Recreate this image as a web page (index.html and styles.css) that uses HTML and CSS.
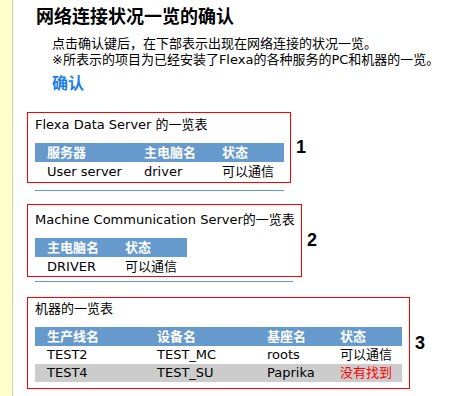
FILE: index.html
```html
<!DOCTYPE html>
<html lang="zh-CN">
<head>
    <meta charset="UTF-8">
    <meta name="viewport" content="width=device-width, initial-scale=1.0">
    <title>网络连接状况一览的确认</title>
    <link rel="stylesheet" href="styles.css">
</head>
<body>
    <div class="sidebar"></div>

    <div class="main">
        <h1 class="page-title">网络连接状况一览的确认</h1>
        <p class="intro">点击确认键后，在下部表示出现在网络连接的状况一览。<br>※所表示的项目为已经安装了Flexa的各种服务的PC和机器的一览。</p>
        <a href="#" class="confirm">确认</a>

        <div class="list-row row-1">
            <div class="list-box box-1">
                <div class="caption">Flexa Data Server 的一览表</div>
                <table class="list-table table-1">
                    <colgroup>
                        <col class="w97">
                        <col class="w78">
                        <col class="w74">
                    </colgroup>
                    <tr>
                        <th>服务器</th>
                        <th>主电脑名</th>
                        <th>状态</th>
                    </tr>
                    <tr>
                        <td>User server</td>
                        <td>driver</td>
                        <td>可以通信</td>
                    </tr>
                </table>
            </div>
            <span class="num">1</span>
        </div>
        <div class="divider div-1"></div>

        <div class="list-row row-2">
            <div class="list-box box-2">
                <div class="caption">Machine Communication Server的一览表</div>
                <table class="list-table table-2">
                    <colgroup>
                        <col class="w78">
                        <col class="w74">
                    </colgroup>
                    <tr>
                        <th>主电脑名</th>
                        <th>状态</th>
                    </tr>
                    <tr>
                        <td>DRIVER</td>
                        <td>可以通信</td>
                    </tr>
                </table>
            </div>
            <span class="num">2</span>
        </div>
        <div class="divider div-2"></div>

        <div class="list-row row-3">
            <div class="list-box box-3">
                <div class="caption">机器的一览表</div>
                <table class="list-table table-3">
                    <colgroup>
                        <col class="w110">
                        <col class="w110">
                        <col class="w73">
                        <col class="w74">
                    </colgroup>
                    <tr>
                        <th>生产线名</th>
                        <th>设备名</th>
                        <th>基座名</th>
                        <th>状态</th>
                    </tr>
                    <tr>
                        <td>TEST2</td>
                        <td>TEST_MC</td>
                        <td>roots</td>
                        <td>可以通信</td>
                    </tr>
                    <tr class="gray">
                        <td>TEST4</td>
                        <td>TEST_SU</td>
                        <td>Paprika</td>
                        <td class="error">没有找到</td>
                    </tr>
                </table>
            </div>
            <span class="num">3</span>
        </div>
    </div>
</body>
</html>
```

FILE: styles.css
```css
body {
    font-family: 'DejaVu Sans', 'Noto Sans CJK SC', sans-serif;
    font-size: 13px;
    color: #000;
    background-color: #fff;
    margin: 0;
    display: flex;
    min-height: 100vh;
}

.sidebar {
    width: 12px;
    background-color: #ffffcc;
    border-right: 1px solid #d6d2a0;
    flex-shrink: 0;
}

.main {
    padding: 6px 0 0 14px;
}

.page-title {
    font-size: 18px;
    font-weight: bold;
    line-height: 22px;
    margin: 0 0 0 9px;
}

.intro {
    margin: 8px 0 0 25px;
    line-height: 16px;
    white-space: nowrap;
}

.confirm {
    display: block;
    margin: 6px 0 0 25px;
    font-size: 16px;
    font-weight: bold;
    line-height: 20px;
    color: #1a7ee6;
    text-decoration: none;
}

.list-row {
    display: flex;
    align-items: center;
    gap: 5px;
}

.row-1 {
    margin-top: 18px;
}

.row-2 {
    margin-top: 13px;
}

.row-3 {
    margin-top: 15px;
}

.list-box {
    border: 1px solid #ff0000;
    padding: 4px 6px 1px 7px;
    flex-shrink: 0;
}

.box-1 {
    width: 249px;
}

.box-2 {
    width: 259px;
    padding: 7px 7px 0 7px;
}

.box-3 {
    width: 367px;
    padding: 3px 7px 6px 7px;
}

.caption {
    line-height: 16px;
    margin-bottom: 10px;
    white-space: nowrap;
}

.list-table {
    border-collapse: collapse;
    border-spacing: 0;
    table-layout: fixed;
}

.table-1 {
    width: 249px;
}

.table-2 {
    width: 152px;
}

.table-3 {
    width: 367px;
}

.list-table th,
.list-table td {
    box-sizing: border-box;
    padding: 0 0 0 12px;
    text-align: left;
    white-space: nowrap;
    overflow: hidden;
}

.list-table th {
    background-color: #6699cc;
    color: #fff;
    font-weight: bold;
    height: 19px;
    line-height: 19px;
}

.list-table td {
    height: 19px;
    line-height: 19px;
}

.table-3 td {
    height: 18px;
    line-height: 18px;
}

.w110 { width: 110px; }
.w97 { width: 97px; }
.w78 { width: 78px; }
.w74 { width: 74px; }
.w73 { width: 73px; }

.list-table tr.gray td {
    background-color: #cccccc;
}

.list-table td.error {
    color: #ff0000;
}

.num {
    font-family: 'Liberation Sans', Arial, sans-serif;
    font-size: 18px;
    font-weight: bold;
}

.divider {
    height: 1px;
    background-color: #5b9bd5;
    margin-left: 8px;
}

.div-1 {
    width: 249px;
    margin-top: 7px;
}

.div-2 {
    width: 258px;
    margin-top: 4px;
}
```
